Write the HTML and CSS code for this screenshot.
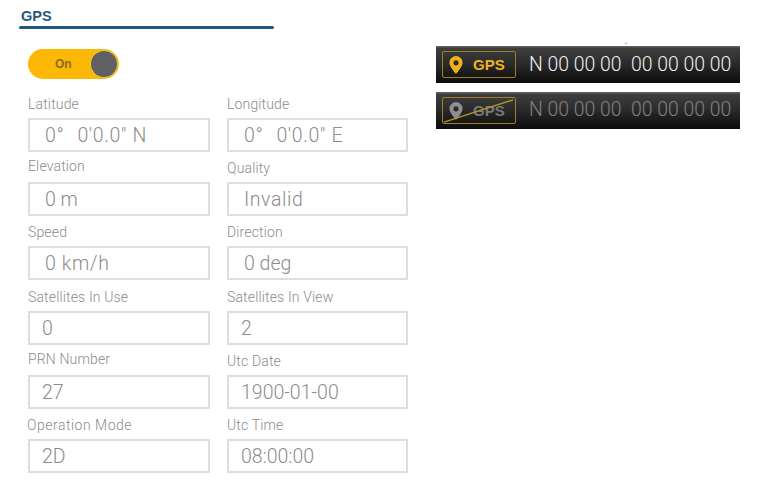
FILE: index.html
```html
<!DOCTYPE html>
<html lang="en">
<head>
<meta charset="utf-8">
<title>GPS</title>
<link rel="stylesheet" href="styles.css">
</head>
<body>
<div class="page">
  <section class="left">
    <header class="head"><h1 class="title">GPS</h1><div class="rule"></div></header>
    <div class="toggle"><span class="toggle-text">On</span><span class="knob"></span></div>
    <div class="form">
      <div class="field"><label class="label">Latitude</label><div class="box spaced"><span class="gap">0°</span>0′0.0″ N</div></div>
      <div class="field"><label class="label">Longitude</label><div class="box spaced"><span class="gap">0°</span>0′0.0″ E</div></div>
      <div class="field"><label class="label raise">Elevation</label><div class="box">0 m</div></div>
      <div class="field"><label class="label">Quality</label><div class="box spaced">Invalid</div></div>
      <div class="field"><label class="label">Speed</label><div class="box spaced">0 km/h</div></div>
      <div class="field"><label class="label">Direction</label><div class="box">0 deg</div></div>
      <div class="field"><label class="label">Satellites In Use</label><div class="box tight">0</div></div>
      <div class="field"><label class="label">Satellites In View</label><div class="box tight">2</div></div>
      <div class="field"><label class="label raise">PRN Number</label><div class="box tight">27</div></div>
      <div class="field"><label class="label">Utc Date</label><div class="box tight">1900-01-00</div></div>
      <div class="field"><label class="label shift">Operation Mode</label><div class="box tight">2D</div></div>
      <div class="field"><label class="label">Utc Time</label><div class="box tight">08:00:00</div></div>
    </div>
  </section>
  <aside class="right">
    <span class="speck"></span>
    <div class="bar">
      <div class="badge">
        <svg class="pin" viewBox="0 0 14 18"><path fill="#f2b01e" fill-rule="evenodd" d="M7 0a6.6 6.6 0 0 0-6.6 6.6C.4 11 7 18 7 18s6.6-7 6.6-11.4A6.6 6.6 0 0 0 7 0zm0 4.2a2.6 2.6 0 1 1 0 5.2 2.6 2.6 0 0 1 0-5.2z"/></svg>
        <span class="badge-text">GPS</span>
      </div>
      <span class="coords">N 00 00 00&nbsp; 00 00 00 00</span>
    </div>
    <div class="bar off">
      <div class="badge">
        <svg class="pin" viewBox="0 0 14 18"><path fill="#8d8f91" fill-rule="evenodd" d="M7 0a6.6 6.6 0 0 0-6.6 6.6C.4 11 7 18 7 18s6.6-7 6.6-11.4A6.6 6.6 0 0 0 7 0zm0 4.2a2.6 2.6 0 1 1 0 5.2 2.6 2.6 0 0 1 0-5.2z"/></svg>
        <span class="badge-text">GPS</span>
        <svg class="slash" viewBox="0 0 74 28" preserveAspectRatio="none"><line x1="2" y1="26" x2="71" y2="3" stroke="#b59425" stroke-width="1.5"/></svg>
      </div>
      <span class="coords">N 00 00 00&nbsp; 00 00 00 00</span>
    </div>
  </aside>
</div>
</body>
</html>
```
FILE: styles.css
```css
* { box-sizing: border-box; }
html, body { margin: 0; padding: 0; background: #fff; }
body { width: 758px; height: 496px; overflow: hidden; font-family: Roboto, "Liberation Sans", sans-serif; }
.page { display: flex; padding-top: 8px; }
.left { width: 436px; flex: none; padding-left: 19px; }
.head { width: 255px; }
.title { margin: 0 0 0 2px; font: 700 14.5px/16px "Liberation Sans", sans-serif; color: #235a7d; }
.rule { height: 3px; margin-top: 2px; background: #1f5a82; border-radius: 2px; }
.toggle { margin: 20px 0 0 9px; width: 91px; height: 30px; border-radius: 15px; background: #fdb705; display: flex; align-items: center; padding: 0 2px 0 27px; justify-content: space-between; }
.toggle-text { font: 700 12px/14px "Liberation Sans", sans-serif; color: #8a6d25; }
.knob { width: 26px; height: 26px; border-radius: 50%; background: #5f6064; box-shadow: 0 0 0 1px #e8c52e; }
.form { display: grid; grid-template-columns: 182px 181px; column-gap: 17px; grid-auto-rows: 64.2px; margin: 18px 0 0 9px; }
.field { display: flex; flex-direction: column; }
.label { font-size: 14px; font-weight: 300; line-height: 16px; height: 22px; margin-top: -1px; color: #8b8b8b; letter-spacing: .15px; white-space: nowrap; }
.raise { height: 24px; margin-top: -3px; }
.shift { margin-left: -1px; letter-spacing: .5px; }
.box { height: 34px; border: 2px solid #dedede; padding-left: 15px; font-size: 19.5px; font-weight: 300; line-height: 31px; color: #8c8c8c; white-space: nowrap; }
.spaced { letter-spacing: .6px; }
.tight { padding-left: 12px; }
.gap { margin-right: 13px; }
.right { position: relative; width: 304px; flex: none; padding-top: 38px; display: flex; flex-direction: column; gap: 9px; }
.speck { position: absolute; left: 189px; top: 35px; width: 2px; height: 1px; background: #999; }
.bar { height: 37px; display: flex; align-items: center; padding-left: 6px; background: linear-gradient(#6a6a6a 0, #3e3e3e 6%, #2c2c2c 45%, #0c0c0c 100%); }
.badge { position: relative; width: 74px; height: 27px; flex: none; display: flex; align-items: center; gap: 10px; padding-left: 6px; border: 1.5px solid #9d7f25; border-radius: 2px; }
.pin { width: 14px; height: 18px; }
.badge-text { font: 700 15px/16px "Liberation Sans", sans-serif; color: #f0b41c; }
.coords { margin: -1px 0 0 13px; font-size: 19.4px; font-weight: 300; color: #f0f0f0; white-space: nowrap; }
.off .badge-text { color: #77797b; }
.off .coords { margin-top: -3px; color: #808284; }
.slash { position: absolute; left: -1px; top: -1px; width: 74px; height: 27px; }
```
